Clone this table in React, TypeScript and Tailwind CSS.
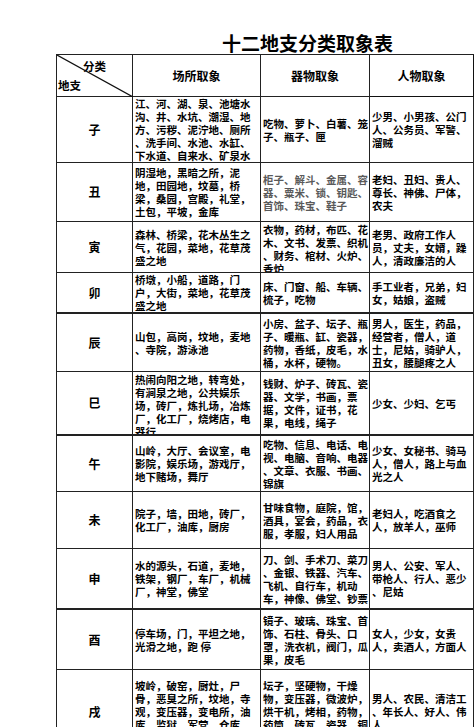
import React from "react";

type Row = {
  label: string;
  h: string;
  b: string;
  c2: string[];
  c3: string[];
  c4: string[];
  c3gray?: boolean;
  top2?: boolean;
  top3?: boolean;
};

const rows: Row[] = [
  {
    label: "子",
    h: "h-[66px]",
    b: "border-b",
    c2: ["江、河、湖、泉、池塘水", "沟、井、水坑、潮湿、地", "方、污秽、泥泞地、厕所", "、洗手间、水池、水缸、", "下水道、自来水、矿泉水"],
    c3: ["吃物、萝卜、白薯、笼", "子、瓶子、匣"],
    c4: ["少男、小男孩、公门", "人、公务员、军警、", "溜贼"],
  },
  {
    label: "丑",
    h: "h-[59px]",
    b: "border-b",
    c2: ["阴湿地，黑暗之所，泥", "地，田园地，坟墓，桥", "梁，桑园，宫殿，礼堂，", "土包，平坡，金库"],
    c3: ["柜子、解斗、金属、容", "器、粟米、锁、钥匙、", "首饰、珠宝、鞋子"],
    c4: ["老妇、丑妇、贵人、", "尊长、神佛、尸体，", "农夫"],
    c3gray: true,
  },
  {
    label: "寅",
    h: "h-[51px]",
    b: "border-b",
    c2: ["森林、桥梁，花木丛生之", "气，花园，菜地，花草茂", "盛之地"],
    c3: ["衣物，药材，布匹、花", "木、文书、发票、织机", "、财务、棺材、火炉、", "香炉"],
    c4: ["老男、政府工作人", "员，丈夫，女婿，躁", "人，清政廉洁的人"],
    top3: true,
  },
  {
    label: "卯",
    h: "h-[41px]",
    b: "border-b-2",
    c2: ["桥墩，小船，道路，门", "户，大街，菜地，花草茂", "盛之地"],
    c3: ["床、门窗、船、车辆、", "梳子，吃物"],
    c4: ["手工业者，兄弟，妇", "女，姑娘，盗贼"],
  },
  {
    label: "辰",
    h: "h-[58px]",
    b: "border-b",
    c2: ["山包，高岗，坟地，麦地", "、寺院，游泳池"],
    c3: ["小房、盆子、坛子、瓶", "子、暖瓶、缸、瓷器，", "药物，香纸，皮毛，水", "桶，水杯，硬物。"],
    c4: ["男人，医生，药品，", "经营者，僧人，道", "士，尼姑，骑驴人，", "丑女，腰腿疼之人"],
  },
  {
    label: "巳",
    h: "h-[64px]",
    b: "border-b-2",
    c2: ["热闹向阳之地，转弯处，", "有涧泉之地，公共娱乐", "场，砖厂，炼扎场，冶炼", "厂，化工厂，烧烤店，电", "器行"],
    c3: ["钱财、炉子、砖瓦、瓷", "器、文学，书画，票", "据，文件，证书，花", "果，电线，绳子"],
    c4: ["少女、少妇、乞丐"],
    top2: true,
  },
  {
    label: "午",
    h: "h-[56px]",
    b: "border-b",
    c2: ["山岭，大厅、会议室，电", "影院，娱乐场，游戏厅，", "地下赌场，舞厅"],
    c3: ["吃物、信息、电话、电", "视、电脑、音响、电器", "、文章、衣服、书画、", "锦旗"],
    c4: ["少女、女秘书、骑马", "人，僧人，路上与血", "光之人"],
  },
  {
    label: "未",
    h: "h-[57px]",
    b: "border-b",
    c2: ["院子，墙，田地，砖厂，", "化工厂，油库，厨房"],
    c3: ["甘味食物，庭院，馆，", "酒具，宴会，药品，衣", "服，孝服，妇人用品"],
    c4: ["老妇人，吃酒食之", "人，放羊人，巫师"],
  },
  {
    label: "申",
    h: "h-[61px]",
    b: "border-b-2",
    c2: ["水的源头，石道，麦地，", "铁架，钢厂，车厂，机械", "厂，神堂，佛堂"],
    c3: ["刀、剑、手术刀、菜刀", "、金银、铁器、汽车、", "飞机、自行车，机动", "车，神像、佛堂、钞票"],
    c4: ["男人、公安、军人、", "带枪人、行人、恶少", "、尼姑"],
  },
  {
    label: "酉",
    h: "h-[60px]",
    b: "border-b",
    c2: ["停车场，门，平坦之地，", "光滑之地，跑 停"],
    c3: ["镜子、玻璃、珠宝、首", "饰、石柱、骨头、口", "罩，洗衣机，阀门，瓜", "果，皮毛"],
    c4: ["女人，少女，女贵", "人，卖酒人，方面人"],
  },
  {
    label: "戌",
    h: "h-[84px]",
    b: "border-b",
    c2: ["坡岭，破窑，厨灶，尸", "骨，恶臭之所，坟地，寺", "观，变压器，变电所，油", "库，监狱，军营，仓库，", "宗教场所"],
    c3: ["坛子，坚硬物，干燥", "物，变压器，微波炉，", "烘干机，烤相，药物，", "药筒，砖瓦，瓷器，铜", "铁，枪炮，电器"],
    c4: ["男人、农民、清洁工", "、年长人、好人、伟", "人"],
  },
];

const font = { fontFamily: '"Noto Sans CJK SC", "Noto Sans", sans-serif' };

function Lines({ lines }: { lines: string[] }) {
  return (
    <div className="flex flex-col">
      {lines.map((l, i) => (
        <div key={i} className="whitespace-pre leading-[13px]">
          {l}
        </div>
      ))}
    </div>
  );
}

export default function App() {
  return (
    <div className="w-[474px] h-[727px] overflow-hidden bg-white text-black" style={font}>
      <div className="h-[54px] pt-[33px] pl-[222px] text-[19px] leading-[20px] font-bold whitespace-nowrap">
        十二地支分类取象表
      </div>
      <div className="ml-[56px] border-l border-t border-[#222] grid grid-cols-[76px_128px_109px_105px] text-[10.5px] font-bold">
        {/* header */}
        <div className="relative h-[42px] border-r border-b border-[#222] flex flex-col justify-between pt-[5px] pb-[4px] text-[11.5px] leading-[13px]">
          <svg className="absolute inset-0" width="76" height="42" viewBox="0 0 76 42">
            <line x1="0" y1="0" x2="76" y2="42" stroke="#111" strokeWidth="1.2" />
          </svg>
          <div className="pl-[26px]">分类</div>
          <div className="pl-[1px]">地支</div>
        </div>
        <div className="h-[42px] border-r border-b border-[#222] flex items-center justify-center text-[12px]">场所取象</div>
        <div className="h-[42px] border-r border-b border-[#222] flex items-center justify-center text-[12px]">器物取象</div>
        <div className="h-[42px] border-r-2 border-b border-[#111] flex items-center justify-center text-[12px]">人物取象</div>
        {rows.map((r) => (
          <React.Fragment key={r.label}>
            <div className={`${r.h} ${r.b} border-r border-[#222] flex items-center justify-center text-[12px]`}>{r.label}</div>
            <div className={`${r.h} ${r.b} border-r border-[#222] flex ${r.top2 ? "items-start pt-[1px]" : "items-center"} overflow-hidden pl-[2px]`}>
              <Lines lines={r.c2} />
            </div>
            <div className={`${r.h} ${r.b} border-r border-[#222] flex ${r.top3 ? "items-start pt-[1px]" : "items-center"} overflow-hidden pl-[2px] ${r.c3gray ? "text-[#5a5a5a]" : ""}`}>
              <Lines lines={r.c3} />
            </div>
            <div className={`${r.h} ${r.b} border-r-2 border-[#222] flex items-center overflow-hidden pl-[2px]`}>
              <Lines lines={r.c4} />
            </div>
          </React.Fragment>
        ))}
      </div>
    </div>
  );
}
